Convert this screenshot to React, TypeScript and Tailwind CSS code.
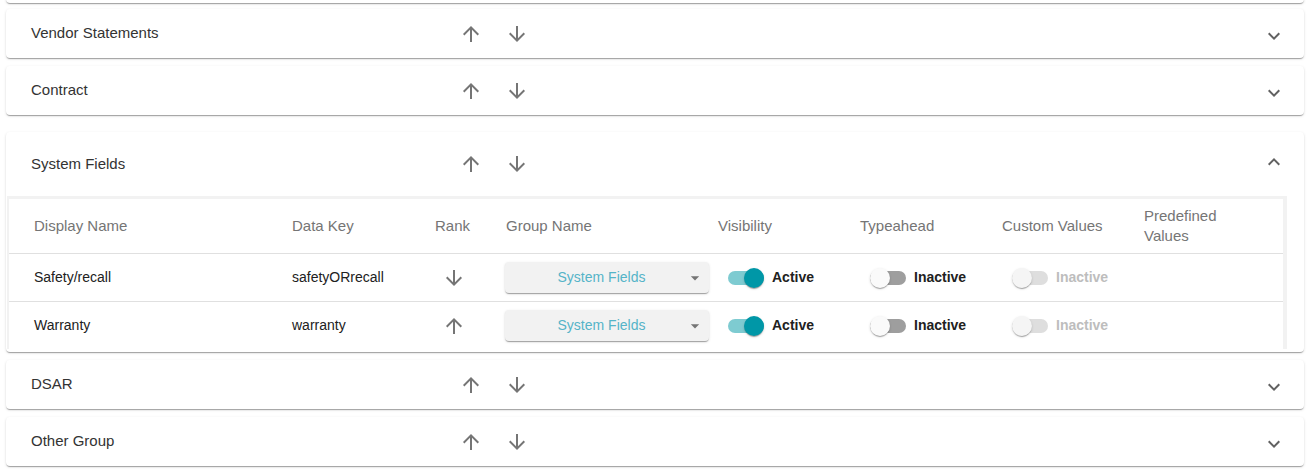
import type { ReactNode } from 'react'

const cardShadow =
  'shadow-[0px_2px_1px_-1px_rgba(0,0,0,0.2),0px_1px_1px_0px_rgba(0,0,0,0.14),0px_1px_3px_0px_rgba(0,0,0,0.12)]'

function ArrowUp({ className = '' }: { className?: string }) {
  return (
    <svg viewBox="0 0 24 24" className={`h-6 w-6 fill-[#757575] ${className}`}>
      <path d="M4 12l1.41 1.41L11 7.83V20h2V7.83l5.58 5.59L20 12l-8-8-8 8z" />
    </svg>
  )
}

function ArrowDown({ className = '' }: { className?: string }) {
  return (
    <svg viewBox="0 0 24 24" className={`h-6 w-6 fill-[#757575] ${className}`}>
      <path d="M20 12l-1.41-1.41L13 16.17V4h-2v12.17l-5.58-5.59L4 12l8 8 8-8z" />
    </svg>
  )
}

function Chevron({ open }: { open?: boolean }) {
  return (
    <svg
      viewBox="0 0 24 24"
      className={`h-6 w-6 fill-[#616161] ${open ? 'rotate-180 -translate-y-[2px]' : 'translate-y-[2px]'}`}
    >
      <path d="M16.59 8.59L12 13.17 7.41 8.59 6 10l6 6 6-6z" />
    </svg>
  )
}

function Summary({ title, open }: { title: string; open?: boolean }) {
  return (
    <div className={`flex items-center pl-[25px] pr-[18px] ${open ? 'h-[64px]' : 'h-[49px]'}`}>
      <div className="w-[428px] text-[15px] text-[#333]">{title}</div>
      <div className="flex items-center gap-[22px]">
        <ArrowUp />
        <ArrowDown />
      </div>
      <div className="flex-1" />
      <Chevron open={open} />
    </div>
  )
}

function Card({ title, className = '' }: { title: string; className?: string }) {
  return (
    <div className={`rounded-[4px] bg-white ${cardShadow} ${className}`}>
      <Summary title={title} />
    </div>
  )
}

function Switch({ state }: { state: 'on' | 'off' | 'disabled' }) {
  const track =
    state === 'on' ? 'bg-[#7ecbd1] justify-end' : state === 'off' ? 'bg-[#9e9e9e]' : 'bg-[#dedede]'
  const thumb =
    state === 'on' ? 'bg-[#0097a7]' : state === 'off' ? 'bg-[#fafafa]' : 'bg-[#f5f5f5]'
  return (
    <div className={`ml-[10px] flex h-[14px] w-[36px] items-center rounded-full ${track}`}>
      <div className={`h-[20px] w-[20px] rounded-full ${thumb} ${cardShadow}`} />
    </div>
  )
}

function Toggle({ state }: { state: 'on' | 'off' | 'disabled' }) {
  return (
    <div className="flex items-center gap-[8px]">
      <Switch state={state} />
      <span
        className={`text-[14px] font-bold ${state === 'disabled' ? 'text-[#bdbdbd]' : 'text-[#212121]'}`}
      >
        {state === 'on' ? 'Active' : 'Inactive'}
      </span>
    </div>
  )
}

function GroupSelect() {
  return (
    <div className={`-ml-[1px] flex h-[31px] w-[204px] items-center rounded-[4px] bg-[#f2f2f2] pl-[13px] ${cardShadow}`}>
      <span className="flex-1 text-center text-[14px] text-[#55b4c8]">System Fields</span>
      <svg viewBox="0 0 24 24" className="mr-[4px] h-5 w-5 fill-[#757575]">
        <path d="M7 10l5 5 5-5z" />
      </svg>
    </div>
  )
}

const grid = 'grid grid-cols-[258px_143px_71px_212px_142px_142px_142px_1fr] items-center pl-[25px]'

const rows: { name: string; key: string; rank: 'up' | 'down' }[] = [
  { name: 'Safety/recall', key: 'safetyORrecall', rank: 'down' },
  { name: 'Warranty', key: 'warranty', rank: 'up' },
]

function Cell({ children }: { children: ReactNode }) {
  return <div className="flex items-center">{children}</div>
}

function SystemFields() {
  return (
    <div className={`mt-[17px] rounded-[4px] bg-white ${cardShadow}`}>
      <Summary title="System Fields" open />
      <div className="pb-[3px] pl-[1px] pr-[17px]">
        <div className="border-l-2 border-r-4 border-t-[3px] border-[#f2f2f2]">
          <div className={`${grid} h-[55px] border-b border-[#e0e0e0] text-[15px] leading-[20px] text-[#757575]`}>
            <div>Display Name</div>
            <div>Data Key</div>
            <div>Rank</div>
            <div>Group Name</div>
            <div>Visibility</div>
            <div>Typeahead</div>
            <div>Custom Values</div>
            <div>
              Predefined
              <br />
              Values
            </div>
          </div>
          {rows.map((r, i) => (
            <div
              key={r.key}
              className={`${grid} text-[14px] text-[#212121] ${i === 0 ? 'h-[48px] border-b border-[#e0e0e0]' : 'h-[47px]'}`}
            >
              <Cell>{r.name}</Cell>
              <Cell>{r.key}</Cell>
              <Cell>{r.rank === 'up' ? <ArrowUp className="ml-[7px]" /> : <ArrowDown className="ml-[7px]" />}</Cell>
              <Cell>
                <GroupSelect />
              </Cell>
              <Cell>
                <Toggle state="on" />
              </Cell>
              <Cell>
                <Toggle state="off" />
              </Cell>
              <Cell>
                <Toggle state="disabled" />
              </Cell>
              <Cell>{null}</Cell>
            </div>
          ))}
        </div>
      </div>
    </div>
  )
}

export default function App() {
  return (
    <div className="h-[470px] overflow-hidden bg-white pl-[6px] pr-[11px] font-['Liberation_Sans',Arial,sans-serif]">
      <div className={`-mt-[46px] h-[49px] rounded-[4px] bg-white ${cardShadow}`} />
      <Card title="Vendor Statements" className="mt-[6px]" />
      <Card title="Contract" className="mt-[8px]" />
      <SystemFields />
      <Card title="DSAR" className="mt-[8px]" />
      <Card title="Other Group" className="mt-[8px]" />
    </div>
  )
}
